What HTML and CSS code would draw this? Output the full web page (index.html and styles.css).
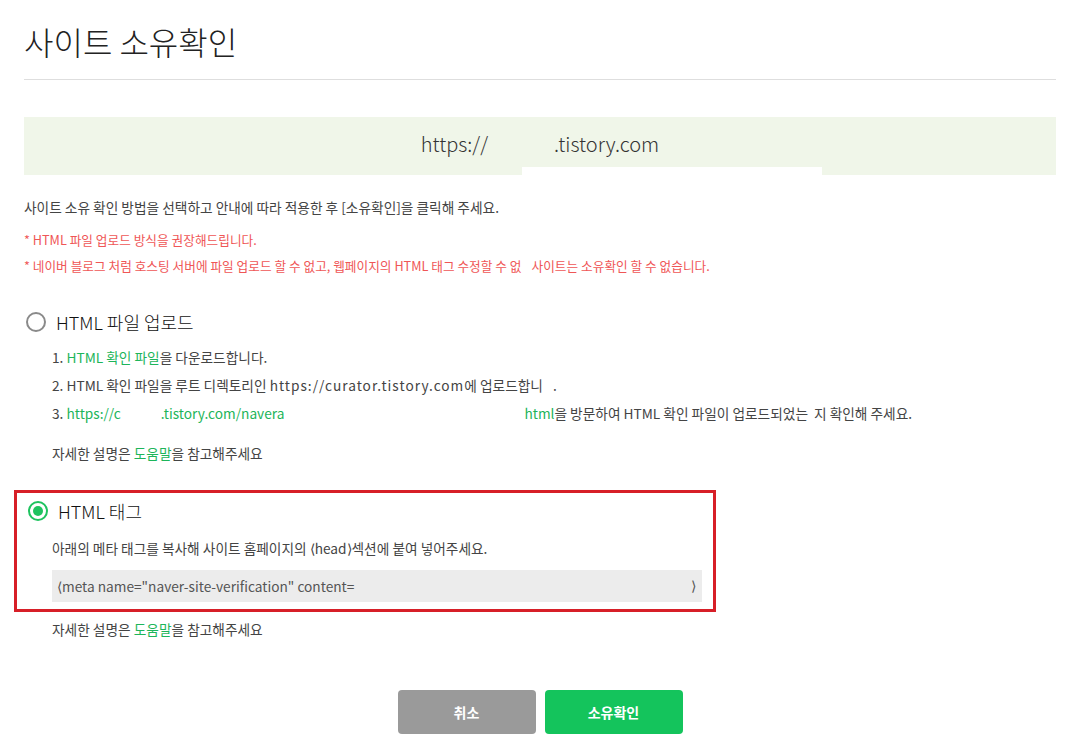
FILE: index.html
```html
<!DOCTYPE html>
<html>
<head>
    <link rel="stylesheet" href="styles.css">
</head>
<body>
    <div class="page">
        <h1 class="title">사이트 소유확인</h1>

        <div class="site-box">
            <span>https://</span><span class="blank-name"></span><span>.tistory.com</span>
            <div class="site-mask"></div>
        </div>

        <p class="guide">사이트 소유 확인 방법을 선택하고 안내에 따라 적용한 후 [소유확인]을 클릭해 주세요.</p>
        <p class="note first">* HTML 파일 업로드 방식을 권장해드립니다.</p>
        <p class="note">* 네이버 블로그 처럼 호스팅 서버에 파일 업로드 할 수 없고, 웹페이지의 HTML 태그 수정할 수 없<span class="gap-s"></span>사이트는 소유확인 할 수 없습니다.</p>

        <!-- method 1 -->
        <div class="method">
            <div class="method-head">
                <span class="radio"></span>
                <span class="method-title">HTML 파일 업로드</span>
            </div>
            <ol class="steps">
                <li>1. <a class="link">HTML 확인 파일</a>을 다운로드합니다.</li>
                <li>2. HTML 확인 파일을 루트 디렉토리인 <span class="url">https://curator.tistory.com</span>에 업로드합니<span class="gap-s"></span>.</li>
                <li>3. <a class="link">https://c<span class="gap-m"></span>.tistory.com/navera<span class="gap-l"></span>html</a>을 방문하여 HTML 확인 파일이 업로드되었는<span class="gap-xs"></span>지 확인해 주세요.</li>
            </ol>
            <p class="help">자세한 설명은 <a class="link">도움말</a>을 참고해주세요</p>
        </div>

        <!-- method 2 -->
        <div class="method selected">
            <div class="method-head">
                <span class="radio checked"></span>
                <span class="method-title">HTML 태그</span>
            </div>
            <p class="tag-desc">아래의 메타 태그를 복사해 사이트 홈페이지의 <span class="angle">&#10216;</span>head<span class="angle">&#10217;</span>섹션에 붙여 넣어주세요.</p>
            <div class="tag-code">
                <span><span class="angle">&#10216;</span>meta name="naver-site-verification" content=</span>
                <span class="angle">&#10217;</span>
            </div>
        </div>
        <p class="help after">자세한 설명은 <a class="link">도움말</a>을 참고해주세요</p>

        <div class="buttons">
            <button class="btn cancel">취소</button>
            <button class="btn confirm">소유확인</button>
        </div>
    </div>
</body>
</html>
```

FILE: styles.css
```css
body {
    margin: 0;
    font-family: "Noto Sans CJK KR", "Noto Sans", sans-serif;
    color: #333;
    background-color: #fff;
}
.page {
    width: 1032px;
    padding: 20px 15px 0 24px;
}
.title {
    margin: 0;
    font-size: 32px;
    line-height: 42px;
    font-weight: 300;
    color: #222;
    padding-bottom: 17px;
    border-bottom: 1px solid #dedede;
}
.site-box {
    position: relative;
    margin-top: 37px;
    height: 58px;
    display: flex;
    justify-content: center;
    align-items: center;
    background-color: #f0f6e9;
    font-size: 20px;
    line-height: 24px;
    color: #333;
    font-weight: 300;
}
.site-box span {
    margin-top: -4px;
}
.blank-name {
    display: inline-block;
    width: 66px;
}
.site-mask {
    position: absolute;
    left: 498px;
    bottom: 0;
    width: 300px;
    height: 8px;
    background-color: #fff;
}
p {
    margin: 0;
}
.guide {
    margin-top: 22px;
    font-size: 13.7px;
    line-height: 20px;
    color: #444;
}
.note {
    margin-top: 6px;
    font-size: 12.7px;
    line-height: 20px;
    color: #ef5656;
}
.note.first {
    margin-top: 13px;
}
.gap-xs { display: inline-block; width: 6px; }
.gap-s { display: inline-block; width: 10px; }
.gap-m { display: inline-block; width: 40px; }
.gap-l { display: inline-block; width: 240px; }

.method {
    margin-top: 31px;
}
.method-head {
    display: flex;
    align-items: center;
    height: 30px;
}
.radio {
    box-sizing: border-box;
    width: 20px;
    height: 20px;
    margin-left: 2px;
    margin-right: 10px;
    border: 2px solid #8a8a8a;
    border-radius: 50%;
    display: flex;
    justify-content: center;
    align-items: center;
}
.radio.checked {
    border-color: #1ec35f;
}
.radio.checked::after {
    content: "";
    width: 10px;
    height: 10px;
    border-radius: 50%;
    background-color: #1ec35f;
}
.method-title {
    font-size: 18px;
    font-weight: 300;
    color: #111;
}
.steps {
    list-style: none;
    margin: 6px 0 0;
    padding-left: 28px;
    font-size: 13.7px;
    line-height: 28px;
    color: #444;
}
.url {
    letter-spacing: 1px;
}
.link {
    color: #1db55a;
    text-decoration: none;
}
.help {
    margin-top: 12px;
    padding-left: 28px;
    font-size: 13.7px;
    line-height: 28px;
    color: #444;
}
.help.after {
    margin-top: 7px;
    line-height: 20px;
}

.method.selected {
    margin-top: 23px;
    margin-left: -10px;
    width: 687px;
    padding: 3px 0 7px 9px;
    border: 3px solid #d71f28;
}
.tag-desc {
    margin-top: 12px;
    padding-left: 26px;
    font-size: 13.7px;
    line-height: 20px;
    color: #444;
}
.angle {
    font-family: "DejaVu Sans", sans-serif;
    font-weight: 300;
}
.tag-code {
    margin: 11px 11px 0 26px;
    height: 32px;
    padding: 0 6px 0 5px;
    display: flex;
    justify-content: space-between;
    align-items: center;
    background-color: #ececec;
    font-size: 13.7px;
    color: #555;
}

.buttons {
    margin-top: 51px;
    display: flex;
    justify-content: center;
    gap: 9px;
}
.btn {
    width: 138px;
    height: 44px;
    border: none;
    border-radius: 4px;
    font-family: inherit;
    font-size: 14px;
    font-weight: bold;
    color: #fff;
    cursor: pointer;
}
.cancel {
    background-color: #9a9a9a;
}
.confirm {
    background-color: #14c45c;
}
```
